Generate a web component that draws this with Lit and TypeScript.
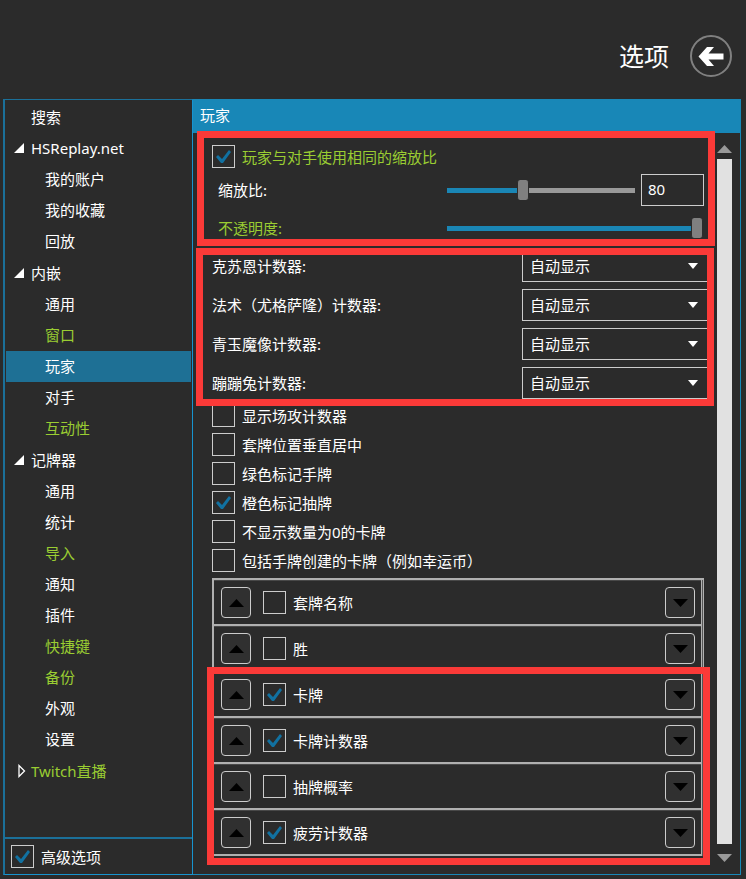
import { LitElement, html, css, svg, nothing } from "lit";
import { customElement, property, state } from "lit/decorators.js";
import { classMap } from "lit/directives/class-map.js";

interface TreeItem {
  label: string;
  advanced?: boolean;
  expanded?: boolean;
  children?: TreeItem[];
  id?: string;
}

const TREE: TreeItem[] = [
  { label: "搜索" },
  {
    label: "HSReplay.net",
    expanded: true,
    children: [{ label: "我的账户" }, { label: "我的收藏" }, { label: "回放" }],
  },
  {
    label: "内嵌",
    expanded: true,
    children: [
      { label: "通用" },
      { label: "窗口", advanced: true },
      { label: "玩家", id: "player" },
      { label: "对手" },
      { label: "互动性", advanced: true },
    ],
  },
  {
    label: "记牌器",
    expanded: true,
    children: [
      { label: "通用" },
      { label: "统计" },
      { label: "导入", advanced: true },
      { label: "通知" },
      { label: "插件" },
      { label: "快捷键", advanced: true },
      { label: "备份", advanced: true },
      { label: "外观" },
      { label: "设置" },
    ],
  },
  { label: "Twitch直播", advanced: true, expanded: false },
];

const COUNTERS = ["克苏恩计数器:", "法术（尤格萨隆）计数器:", "青玉魔像计数器:", "蹦蹦兔计数器:"];

const TOGGLES = [
  { label: "显示场攻计数器", on: false },
  { label: "套牌位置垂直居中", on: false },
  { label: "绿色标记手牌", on: false },
  { label: "橙色标记抽牌", on: true },
  { label: "不显示数量为0的卡牌", on: false },
  { label: "包括手牌创建的卡牌（例如幸运币）", on: false },
];

const PANELS_TOP = [
  { label: "套牌名称", on: false },
  { label: "胜", on: false },
];

const PANELS_MARKED = [
  { label: "卡牌", on: true },
  { label: "卡牌计数器", on: true },
  { label: "抽牌概率", on: false },
  { label: "疲劳计数器", on: true },
];

const shared = css`
  * {
    box-sizing: border-box;
  }
  input,
  select,
  button {
    font: inherit;
    color: inherit;
    margin: 0;
  }
  button {
    padding: 0;
    border: 0;
    background: none;
    cursor: pointer;
  }
  svg {
    display: block;
  }
`;

@customElement("check-option")
class CheckOption extends LitElement {
  @property() label = "";
  @property({ type: Boolean }) checked = false;
  @property({ type: Boolean }) advanced = false;

  static styles = [
    shared,
    css`
      :host {
        display: block;
      }
      .option {
        display: flex;
        align-items: center;
        gap: 7px;
        height: 23px;
      }
      .advanced {
        color: #9acd32;
      }
      .box {
        appearance: none;
        flex: none;
        width: 23px;
        height: 23px;
        border: 1px solid #ccc;
        background: #2b2b2b;
      }
      .box:checked::before {
        content: "";
        display: block;
        width: 21px;
        height: 21px;
        background: #1171a1;
        clip-path: polygon(3px 11px, 5px 9px, 9px 13px, 16px 4px, 18px 6px, 10px 17px, 8px 17px);
      }
    `,
  ];

  render() {
    return html`<label class=${classMap({ option: true, advanced: this.advanced })}>
      <input class="box" type="checkbox" .checked=${this.checked} />
      <span>${this.label}</span>
    </label>`;
  }
}

@customElement("options-tree")
class OptionsTree extends LitElement {
  @state() private selected = "player";

  static styles = [
    shared,
    css`
      :host {
        display: flex;
        flex-direction: column;
        border: 1px solid #1794cf;
        border-left: 2px solid #1b7099;
        border-top-color: #1b7099;
      }
      .tree {
        flex: 1;
        padding: 2px 1px;
      }
      ul {
        list-style: none;
        margin: 0;
        padding: 0;
      }
      .children {
        padding-bottom: 1px;
      }
      .item {
        display: flex;
        align-items: center;
        height: 31px;
        padding: 0 0 2px 8px;
        color: #fff;
        text-decoration: none;
      }
      .children .item {
        padding-left: 39px;
      }
      .item.advanced {
        color: #9acd32;
      }
      .item.selected {
        background: #1e7095;
      }
      .marker {
        width: 17px;
      }
      .footer {
        border-top: 2px solid #1b7099;
        padding: 6px;
      }
    `,
  ];

  private marker(item: TreeItem) {
    if (item.expanded === undefined) return nothing;
    return item.expanded
      ? html`<svg width="10" height="10" aria-hidden="true">${svg`<path d="M0 10L10 0V10Z" fill="#fff" />`}</svg>`
      : html`<svg width="12" height="14" aria-hidden="true">
          ${svg`<path d="M5 1.5V12.5L10.500 7Z" fill="none" stroke="#fff" stroke-width="1.300" />`}
        </svg>`;
  }

  private link(item: TreeItem, nested: boolean) {
    const selected = item.id !== undefined && item.id === this.selected;
    return html`<a
      href="#"
      class=${classMap({ item: true, advanced: !!item.advanced, selected })}
      aria-current=${selected ? "page" : nothing}
      >${nested ? nothing : html`<span class="marker">${this.marker(item)}</span>`}${item.label}</a
    >`;
  }

  render() {
    return html`
      <nav class="tree">
        <ul>
          ${TREE.map(
            (group) => html`<li>
              ${this.link(group, false)}
              ${group.children
                ? html`<ul class="children">
                    ${group.children.map((child) => html`<li>${this.link(child, true)}</li>`)}
                  </ul>`
                : nothing}
            </li>`
          )}
        </ul>
      </nav>
      <div class="footer"><check-option label="高级选项" checked></check-option></div>
    `;
  }
}

@customElement("app-root")
class AppRoot extends LitElement {
  @state() private scaling = 80;
  @state() private opacity = 100;

  static styles = [
    shared,
    css`
      :host {
        display: flex;
        flex-direction: column;
        min-height: 100vh;
        background: #2b2b2b;
        color: #fff;
        font: 15px/20px "Noto Sans", "Noto Sans CJK SC", sans-serif;
      }
      .header {
        display: flex;
        justify-content: flex-end;
        align-items: center;
        gap: 21px;
        padding: 35px 14px 22px;
      }
      .title {
        margin: 0;
        font-size: 25px;
        font-weight: 400;
        line-height: 42px;
      }
      .main {
        flex: 1;
        display: grid;
        grid-template-columns: 190px minmax(0, 1fr);
        padding: 0 5px 4px 3px;
      }
      .panel {
        display: flex;
        flex-direction: column;
        border: solid #1887b7;
        border-width: 0 1px 1px 0;
      }
      .panel-title {
        margin: 0;
        padding: 6px 7px 8px;
        background: #1887b7;
        font-size: 15px;
        font-weight: 400;
        line-height: 20px;
      }
      .body {
        flex: 1;
        display: flex;
        gap: 6px;
        padding: 12px 8px 12px 19px;
      }
      .content {
        flex: 1;
        min-width: 0;
      }
      .marked {
        position: relative;
      }
      .marked::after {
        content: "";
        position: absolute;
        border: 7px solid #fb3a38;
        pointer-events: none;
      }
      .scale {
        margin-right: 7px;
      }
      .scale::after {
        inset: -14px -11px -8px -15px;
      }
      .setting {
        display: grid;
        grid-template-columns: 229px minmax(0, 1fr) auto;
        align-items: center;
        padding-left: 6px;
      }
      .setting.scaling {
        margin: 6px 0 12px;
      }
      .setting.opacity {
        color: #9acd32;
        padding-right: 1px;
      }
      .slider {
        appearance: none;
        width: 100%;
        height: 20px;
        background: linear-gradient(to right, #1a86b5 var(--fill), #999 var(--fill)) center / 100% 5px no-repeat;
      }
      .slider::-webkit-slider-thumb {
        appearance: none;
        width: 12px;
        height: 20px;
        border: solid #2b2b2b;
        border-width: 0 1px;
        border-radius: 3px;
        background: #808080;
      }
      .number {
        width: 63px;
        height: 32px;
        margin-left: 6px;
        padding: 0 6px 2px;
        border: 1px solid #ccc;
        border-radius: 0;
        background: #2b2b2b;
      }
      .counters {
        display: grid;
        gap: 7px;
        margin-top: 12px;
      }
      .counters::after {
        inset: -2px -3px -7px -16px;
      }
      .counter {
        display: grid;
        grid-template-columns: 310px minmax(0, 1fr);
        align-items: center;
      }
      .combo {
        position: relative;
      }
      .combo select {
        display: block;
        appearance: none;
        width: 100%;
        height: 32px;
        padding: 0 7px;
        border: 1px solid #ccc;
        border-radius: 0;
        background: #2b2b2b;
      }
      .combo svg {
        position: absolute;
        right: 13px;
        top: 13px;
        pointer-events: none;
      }
      .toggles {
        display: grid;
        gap: 6px;
        margin: 5px 0 6px;
      }
      .list {
        margin-right: 7px;
        padding-right: 1px;
        border: solid #b0b0b0;
        border-width: 2px 1px 0 2px;
        background: #555;
      }
      .list .marked::after {
        inset: -5px -8px -9px -7px;
      }
      .row {
        display: grid;
        grid-template-columns: auto minmax(0, 1fr) auto;
        align-items: center;
        gap: 12px;
        height: 46px;
        padding: 1px 6px 0 7px;
        border: solid #b0b0b0;
        border-width: 0 1px 2px 0;
        background: #2b2b2b;
        box-shadow: inset 0 1px #484848;
      }
      .move {
        display: grid;
        place-items: center;
        width: 30px;
        height: 31px;
        border: 1px solid #ccc;
        border-radius: 4px;
        background: #303030;
      }
      .scrollbar {
        display: flex;
        flex-direction: column;
        width: 15px;
      }
      .scroll-thumb {
        flex: 1;
        margin: 6px 0 10px;
        background: #e1e1e1;
      }
    `,
  ];

  private triangle(up: boolean, width: number, height: number, fill: string) {
    const d = up ? `M0 ${height}L${width / 2} 0L${width} ${height}Z` : `M0 0H${width}L${width / 2} ${height}Z`;
    return html`<svg width=${width} height=${height} aria-hidden="true">${svg`<path d=${d} fill=${fill} />`}</svg>`;
  }

  private row(item: { label: string; on: boolean }) {
    return html`<div class="row">
      <button class="move" aria-label="上移">${this.triangle(true, 15, 8, "#000")}</button>
      <check-option label=${item.label} ?checked=${item.on}></check-option>
      <button class="move" aria-label="下移">${this.triangle(false, 15, 8, "#000")}</button>
    </div>`;
  }

  render() {
    return html`
      <header class="header">
        <h1 class="title">选项</h1>
        <button aria-label="返回">
          <svg width="42" height="42" viewBox="0 0 42 42" aria-hidden="true">
            <circle cx="21" cy="21" r="20" fill="none" stroke="#808080" stroke-width="2" />
            <path d="M8.500 21.500L17 12H24L18.500 18.500H33.500V24.500H18.500L24 31H17Z" fill="#fff" />
          </svg>
        </button>
      </header>
      <main class="main">
        <options-tree></options-tree>
        <section class="panel">
          <h2 class="panel-title">玩家</h2>
          <div class="body">
            <div class="content">
              <div class="scale marked">
                <check-option label="玩家与对手使用相同的缩放比" checked advanced></check-option>
                <div class="setting scaling">
                  <label for="scaling">缩放比:</label>
                  <input
                    id="scaling"
                    class="slider"
                    type="range"
                    min="0"
                    max="200"
                    .value=${String(this.scaling)}
                    style="--fill: ${this.scaling / 2}%"
                    @input=${(e: Event) => (this.scaling = Number((e.target as HTMLInputElement).value))}
                  />
                  <input class="number" type="text" aria-label="缩放比" .value=${String(this.scaling)} />
                </div>
                <div class="setting opacity">
                  <label for="opacity">不透明度:</label>
                  <input
                    id="opacity"
                    class="slider"
                    type="range"
                    min="0"
                    max="100"
                    .value=${String(this.opacity)}
                    style="--fill: ${this.opacity}%"
                    @input=${(e: Event) => (this.opacity = Number((e.target as HTMLInputElement).value))}
                  />
                </div>
              </div>
              <div class="counters marked">
                ${COUNTERS.map(
                  (label, i) => html`<div class="counter">
                    <label for="counter-${i}">${label}</label>
                    <div class="combo">
                      <select id="counter-${i}">
                        <option>自动显示</option>
                      </select>
                      ${this.triangle(false, 10, 6, "#fff")}
                    </div>
                  </div>`
                )}
              </div>
              <div class="toggles">
                ${TOGGLES.map((t) => html`<check-option label=${t.label} ?checked=${t.on}></check-option>`)}
              </div>
              <div class="list">
                ${PANELS_TOP.map((p) => this.row(p))}
                <div class="marked">${PANELS_MARKED.map((p) => this.row(p))}</div>
              </div>
            </div>
            <div class="scrollbar">
              <button aria-label="向上滚动">${this.triangle(true, 15, 8, "#999")}</button>
              <div class="scroll-thumb"></div>
              <button aria-label="向下滚动">${this.triangle(false, 15, 8, "#999")}</button>
            </div>
          </div>
        </section>
      </main>
    `;
  }
}
